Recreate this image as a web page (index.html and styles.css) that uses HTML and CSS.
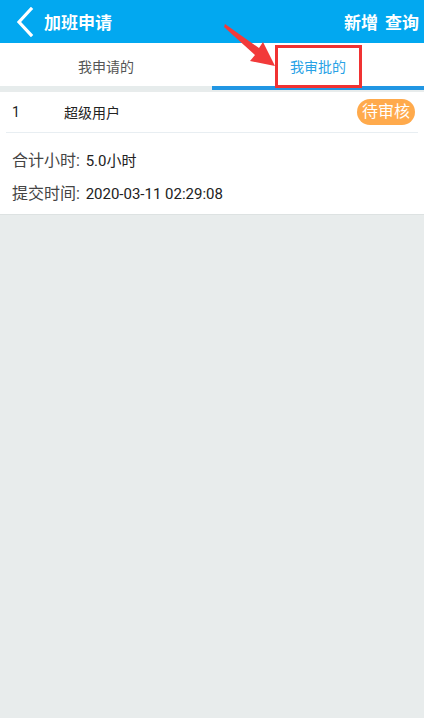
FILE: index.html
```html
<!DOCTYPE html>
<html lang="zh">
<head>
    <meta charset="UTF-8">
    <meta name="viewport" content="width=device-width, initial-scale=1.0">
    <title>加班申请</title>
    <link rel="stylesheet" href="styles.css">
</head>
<body>
    <div class="header">
        <div class="header-left">
            <svg class="back" width="18" height="30" viewBox="0 0 18 30">
                <polyline points="15,2 3,15 15,28" fill="none" stroke="#fff" stroke-width="3.2" stroke-linecap="square"/>
            </svg>
            <span class="title">加班申请</span>
        </div>
        <div class="header-right">
            <span>新增</span>
            <span>查询</span>
        </div>
    </div>

    <div class="tabs">
        <div class="tab">我申请的</div>
        <div class="tab active">我审批的</div>
    </div>

    <div class="card">
        <div class="card-head">
            <span class="num">1</span>
            <span class="user">超级用户</span>
            <span class="badge">待审核</span>
        </div>
        <div class="card-body">
            <div class="line"><span class="label">合计小时:</span> <span class="value">5.0小时</span></div>
            <div class="line"><span class="label">提交时间:</span> <span class="value">2020-03-11 02:29:08</span></div>
        </div>
    </div>

    <!-- annotation drawn over the screenshot -->
    <div class="mark-box"></div>
    <svg class="mark-arrow" width="424" height="100" viewBox="0 0 424 100">
        <polygon points="225,24 259,48 263,42 275,66 250,61 255,55 224,27" fill="#f23a3a"/>
    </svg>
</body>
</html>
```

FILE: styles.css
```css
body {
    margin: 0;
    background-color: #e8ecec;
    font-family: Roboto, "Noto Sans CJK SC", sans-serif;
    color: #333;
    position: relative;
    min-height: 718px;
}
.header {
    height: 43px;
    background-color: #02a8f0;
    display: flex;
    align-items: center;
    justify-content: space-between;
    color: white;
    font-weight: bold;
    font-size: 17px;
}
.header-left {
    display: flex;
    align-items: center;
    padding-left: 16px;
}
.back {
    margin-right: 10px;
}
.header-right {
    display: flex;
    gap: 7px;
    padding-right: 5px;
}
.tabs {
    display: flex;
    background-color: white;
    height: 47px;
}
.tab {
    flex: 1;
    display: flex;
    align-items: center;
    justify-content: center;
    font-size: 14px;
    color: #555;
    border-bottom: 4px solid #e6ecec;
    padding-top: 2px;
}
.tab.active {
    color: #28a2e6;
    border-bottom-color: #2196e3;
}
.card {
    background-color: white;
    margin-top: 2px;
    border-bottom: 1px solid #dde2e2;
}
.card-head {
    display: flex;
    align-items: center;
    height: 40px;
    margin: 0 6px;
    border-bottom: 1px solid #e8eef2;
    font-size: 14px;
    color: #222;
}
.num {
    width: 52px;
    padding-left: 6px;
}
.user {
    flex: 1;
}
.badge {
    background-color: #ffaa4c;
    color: white;
    font-size: 16px;
    padding: 2px 5px;
    border-radius: 13px;
    line-height: 22px;
    margin-right: 3px;
}
.card-body {
    padding: 14px 12px 1px;
}
.line {
    height: 33px;
    font-size: 15px;
}
.label {
    color: #444;
    font-size: 16px;
}
.value {
    color: #222;
    margin-left: 2px;
}
.mark-box {
    position: absolute;
    left: 275px;
    top: 45px;
    width: 81px;
    height: 37px;
    border: 3px solid #f03232;
}
.mark-arrow {
    position: absolute;
    left: 0;
    top: 0;
}
```
